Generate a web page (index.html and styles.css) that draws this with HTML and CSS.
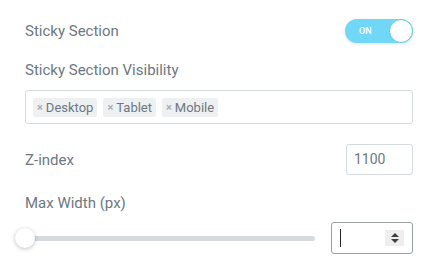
FILE: index.html
```html
<!DOCTYPE html>
<html>
<head>
<meta charset="utf-8">
<link rel="stylesheet" href="styles.css">
</head>
<body>
<div class="panel">
  <div class="row row-toggle">
    <span class="label">Sticky Section</span>
    <div class="toggle">
      <span class="toggle-text">ON</span>
      <span class="toggle-knob"></span>
    </div>
  </div>
  <div class="label label-block">Sticky Section Visibility</div>
  <div class="tagbox">
    <span class="tag"><span class="tag-x">×</span>Desktop</span>
    <span class="tag"><span class="tag-x">×</span>Tablet</span>
    <span class="tag"><span class="tag-x">×</span>Mobile</span>
  </div>
  <div class="row row-z">
    <span class="label">Z-index</span>
    <div class="zinput">1100</div>
  </div>
  <div class="label label-block label-max">Max Width (px)</div>
  <div class="row row-slider">
    <div class="slider">
      <div class="track"></div>
      <div class="knob"></div>
    </div>
    <div class="numinput">
      <span class="caret"></span>
      <span class="spinner">
        <svg width="10" height="12" viewBox="0 0 10 12"><path d="M5 1 L9 5 L1 5 Z" fill="#3d3f42"/><path d="M1 7 L9 7 L5 11 Z" fill="#3d3f42"/></svg>
      </span>
    </div>
  </div>
</div>
</body>
</html>
```

FILE: styles.css
```css
html, body {
  margin: 0;
  padding: 0;
  background: #ffffff;
}
body {
  width: 436px;
  height: 270px;
  overflow: hidden;
  font-family: Roboto, "Liberation Sans", sans-serif;
}
.panel {
  padding: 19px 23px 0 25px;
  display: flex;
  flex-direction: column;
}
.row {
  display: flex;
  justify-content: space-between;
  align-items: center;
}
.label {
  font-size: 15px;
  line-height: 20px;
  color: #6d7882;
}
.row-toggle {
  height: 24px;
}
.toggle {
  position: relative;
  width: 68px;
  height: 24px;
  border-radius: 12px;
  background: #71d7f7;
  box-shadow: 0 1px 3px rgba(0,0,0,0.12);
}
.toggle-text {
  position: absolute;
  left: 14px;
  top: 0;
  line-height: 24px;
  font-size: 9px;
  font-weight: 500;
  color: #ffffff;
}
.toggle-knob {
  position: absolute;
  right: 0;
  top: 0;
  width: 22px;
  height: 22px;
  border-radius: 50%;
  background: #ffffff;
  border: 1px solid #5ec7e8;
}
.label-block {
  margin-top: 17px;
}
.tagbox {
  margin-top: 10px;
  height: 34px;
  box-sizing: border-box;
  border: 1px solid #d5dadf;
  border-radius: 3px;
  padding: 7px;
  display: flex;
  gap: 6px;
}
.tag {
  height: 19px;
  line-height: 19px;
  padding: 0 4px 0 4px;
  background: #eef0f2;
  border-radius: 2px;
  font-size: 13px;
  color: #6d7882;
  display: flex;
  align-items: center;
}
.tag-x {
  font-size: 11px;
  font-weight: 700;
  color: #a4afb7;
  margin-right: 3px;
}
.row-z {
  margin-top: 20px;
  height: 31px;
}
.zinput {
  width: 67px;
  height: 31px;
  box-sizing: border-box;
  border: 1px solid #d5dadf;
  border-radius: 3px;
  padding-left: 7px;
  font-size: 14px;
  line-height: 29px;
  color: #6d7882;
}
.label-max {
  margin-top: 18px;
}
.row-slider {
  margin-top: 9px;
  height: 32px;
}
.slider {
  position: relative;
  width: 290px;
  height: 20px;
  display: flex;
  align-items: center;
}
.track {
  width: 290px;
  height: 5px;
  border-radius: 3px;
  background: #d5dadf;
}
.knob {
  position: absolute;
  left: -10px;
  top: 0;
  width: 20px;
  height: 20px;
  border-radius: 50%;
  background: #ffffff;
  box-shadow: 0 1px 4px rgba(0,0,0,0.25);
}
.numinput {
  width: 82px;
  height: 32px;
  box-sizing: border-box;
  border: 1px solid #9aa0a6;
  border-radius: 3px;
  display: flex;
  align-items: center;
  justify-content: space-between;
  padding: 0 8px 0 8px;
}
.caret {
  width: 1px;
  height: 18px;
  background: #222;
}
.spinner {
  width: 19px;
  height: 16px;
  background: #eeeeee;
  display: flex;
  align-items: center;
  justify-content: center;
}
.spinner svg {
  display: block;
}
```
